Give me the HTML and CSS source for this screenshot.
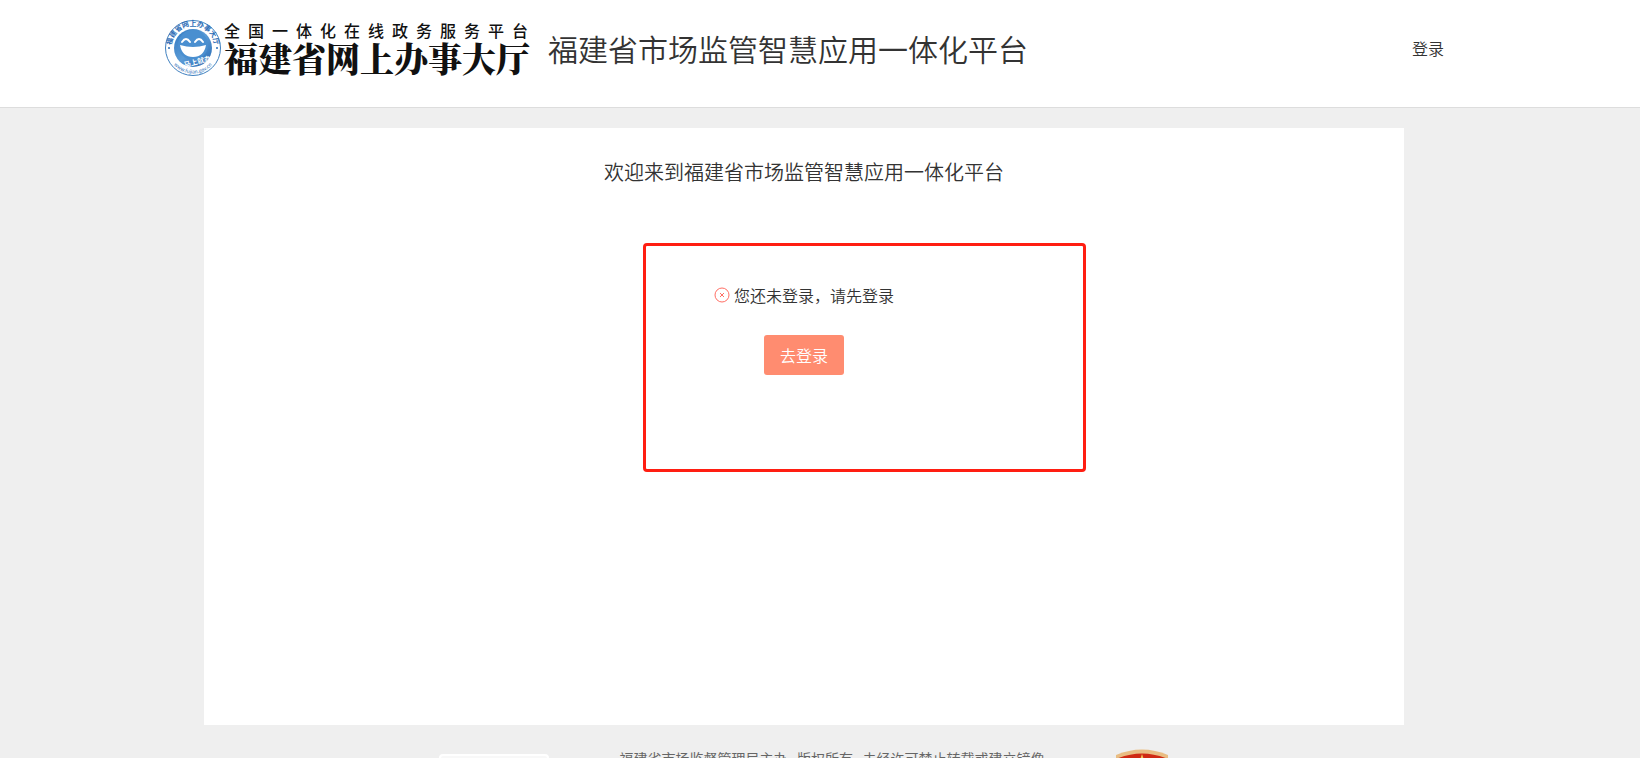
FILE: index.html
```html
<!DOCTYPE html>
<html lang="zh-CN">
<head>
    <meta charset="UTF-8">
    <meta name="viewport" content="width=device-width, initial-scale=1.0">
    <title>福建省市场监管智慧应用一体化平台</title>
    <link rel="stylesheet" href="styles.css">
</head>
<body>

<header class="header">
    <div class="header-inner">
        <a class="logo" href="#">
            <svg class="logo-emblem" viewBox="0 0 58 58" aria-hidden="true">
                <defs>
                    <path id="ring-top" d="M8 33 A21.5 21.5 0 1 1 50 33"/>
                    <path id="ring-bottom" d="M4 34 A25.5 25.5 0 0 0 54 34"/>
                    <linearGradient id="face" x1="0" y1="0" x2="1" y2="1">
                        <stop offset="0" stop-color="#2f78c0"/>
                        <stop offset="0.5" stop-color="#5b9bd6"/>
                        <stop offset="1" stop-color="#2266b0"/>
                    </linearGradient>
                </defs>
                <circle cx="29" cy="29" r="27.5" fill="#fff" stroke="#3f80bf"/>
                <circle cx="29" cy="29" r="19" fill="url(#face)"/>
                <circle cx="29" cy="26" r="15" fill="#4a8fd0"/>
                <g fill="none" stroke="#fff" stroke-width="2" stroke-linecap="round">
                    <path d="M18 23 Q22 17 26 23"/>
                    <path d="M31 23 Q35 17 39 23"/>
                </g>
                <path d="M16 26 Q29 30 42 26 Q40 38 29 38 Q18 38 16 26Z" fill="#fff"/>
                <text class="emblem-name"><textPath href="#ring-top" startOffset="50%">福建省网上办事大厅</textPath></text>
                <text class="emblem-url"><textPath href="#ring-bottom" startOffset="50%">www.fujian.gov.cn</textPath></text>
                <text class="emblem-motto" x="34" y="45" transform="rotate(-14 34 45)">马上就办</text>
                <circle cx="5" cy="29" r="1" fill="#2b6cb5"/>
                <circle cx="53" cy="29" r="1" fill="#2b6cb5"/>
            </svg>
            <span class="logo-text">
                <span class="logo-small">全国一体化在线政务服务平台</span>
                <span class="logo-big">福建省网上办事大厅</span>
            </span>
        </a>
        <h1 class="site-title">福建省市场监管智慧应用一体化平台</h1>
        <a class="login-link" href="#">登录</a>
    </div>
</header>

<div class="content">
    <main class="panel">
        <h2 class="welcome">欢迎来到福建省市场监管智慧应用一体化平台</h2>
        <p class="status">
            <svg class="status-icon" viewBox="0 0 16 16" aria-hidden="true">
                <circle cx="8" cy="8" r="7"/>
                <path d="M6 6 L10 10 M10 6 L6 10"/>
            </svg>
            您还未登录，请先登录
        </p>
        <button class="login-button" type="button">去登录</button>
        <div class="highlight"></div>
    </main>

    <footer class="footer">
        <div class="footer-card"></div>
        <p class="footer-text">福建省市场监督管理局主办&nbsp;&nbsp; 版权所有&nbsp;&nbsp; 未经许可禁止转载或建立镜像</p>
        <svg class="footer-badge" viewBox="0 0 54 64" aria-hidden="true">
            <path d="M1 6 Q27 -5 53 6 V36 Q53 52 27 63 Q1 52 1 36Z" fill="#e9bd83"/>
            <path d="M1 10 Q27 -1 53 10 V36 Q50 50 27 59 Q4 50 1 36Z" fill="#cf2a14"/>
            <path d="M27 5 L29 11 H35 L30 15 L32 21 L27 17 L22 21 L24 15 L19 11 H25Z" fill="#f3c558"/>
        </svg>
    </footer>
</div>

</body>
</html>
```

FILE: styles.css
```css
* {
    box-sizing: border-box;
}
body {
    margin: 0;
    height: 100vh;
    overflow: hidden;
    font-family: "Noto Sans CJK SC", sans-serif;
    font-size: 16px;
    color: #333;
    background-color: #efefef;
}
h1, h2, p {
    margin: 0;
    font-weight: 350;
}
a {
    color: #333;
    text-decoration: none;
}

/* Header */
.header {
    padding: 16px 32px 27px 0;
    background-color: #fff;
    border-bottom: 1px solid #ddd;
}
.header-inner {
    display: flex;
    align-items: center;
    max-width: 1280px;
    height: 64px;
    margin: 0 auto;
}
.logo {
    display: flex;
    align-items: center;
    gap: 2px;
    color: #111;
}
.logo-emblem {
    width: 58px;
    height: 58px;
}
.emblem-name {
    font-size: 7px;
    font-weight: 700;
    fill: #2b6cb5;
    text-anchor: middle;
}
.emblem-url {
    font-size: 5px;
    fill: #2b6cb5;
    text-anchor: middle;
}
.emblem-motto {
    font-size: 7px;
    font-weight: 700;
    fill: #fff;
    text-anchor: middle;
}
.logo-text {
    display: flex;
    flex-direction: column;
    width: 304px;
}
.logo-small {
    font-size: 16px;
    font-weight: 500;
    line-height: 20px;
    text-align-last: justify;
}
.logo-big {
    font-family: "Noto Serif CJK SC", "Noto Sans CJK SC", serif;
    font-size: 34px;
    font-weight: 900;
    line-height: 36px;
    white-space: nowrap;
}
.site-title {
    margin-left: 20px;
    font-size: 30px;
    line-height: 40px;
}
.login-link {
    margin-left: auto;
    font-weight: 350;
}

/* Main panel */
.content {
    padding: 20px 32px 0 0;
}
.panel {
    position: relative;
    display: flex;
    flex-direction: column;
    align-items: center;
    max-width: 1200px;
    min-height: 597px;
    margin: 0 auto 20px;
    padding-top: 28px;
    background-color: #fff;
}
.welcome {
    font-size: 20px;
    line-height: 32px;
}
.status {
    display: flex;
    align-items: center;
    gap: 4px;
    margin-top: 95px;
    line-height: 24px;
}
.status-icon {
    width: 16px;
    height: 16px;
    fill: none;
    stroke: #ff6e64;
}
.login-button {
    margin-top: 28px;
    width: 80px;
    height: 40px;
    padding: 0;
    border: none;
    border-radius: 3px;
    background-color: #ff8c70;
    color: #fff;
    font-family: inherit;
    font-size: 16px;
    font-weight: 350;
    cursor: pointer;
}
.login-button:hover {
    background-color: #ff7a5a;
}
.highlight {
    position: absolute;
    top: 115px;
    left: calc(50% - 161px);
    width: 443px;
    height: 229px;
    border: 3px solid #ff1e12;
    border-radius: 4px;
    pointer-events: none;
}

/* Footer */
.footer {
    display: flex;
    justify-content: center;
    align-items: flex-start;
    gap: 71px;
}
.footer-card {
    width: 110px;
    height: 60px;
    margin-top: 9px;
    border: 2px solid #fff;
    border-radius: 4px;
    background-color: #f8f8f8;
}
.footer-text {
    margin-top: 3px;
    font-size: 14px;
    font-weight: 400;
    line-height: 20px;
    color: #666;
}
.footer-badge {
    width: 54px;
    height: 64px;
    margin-top: 4px;
}
```
